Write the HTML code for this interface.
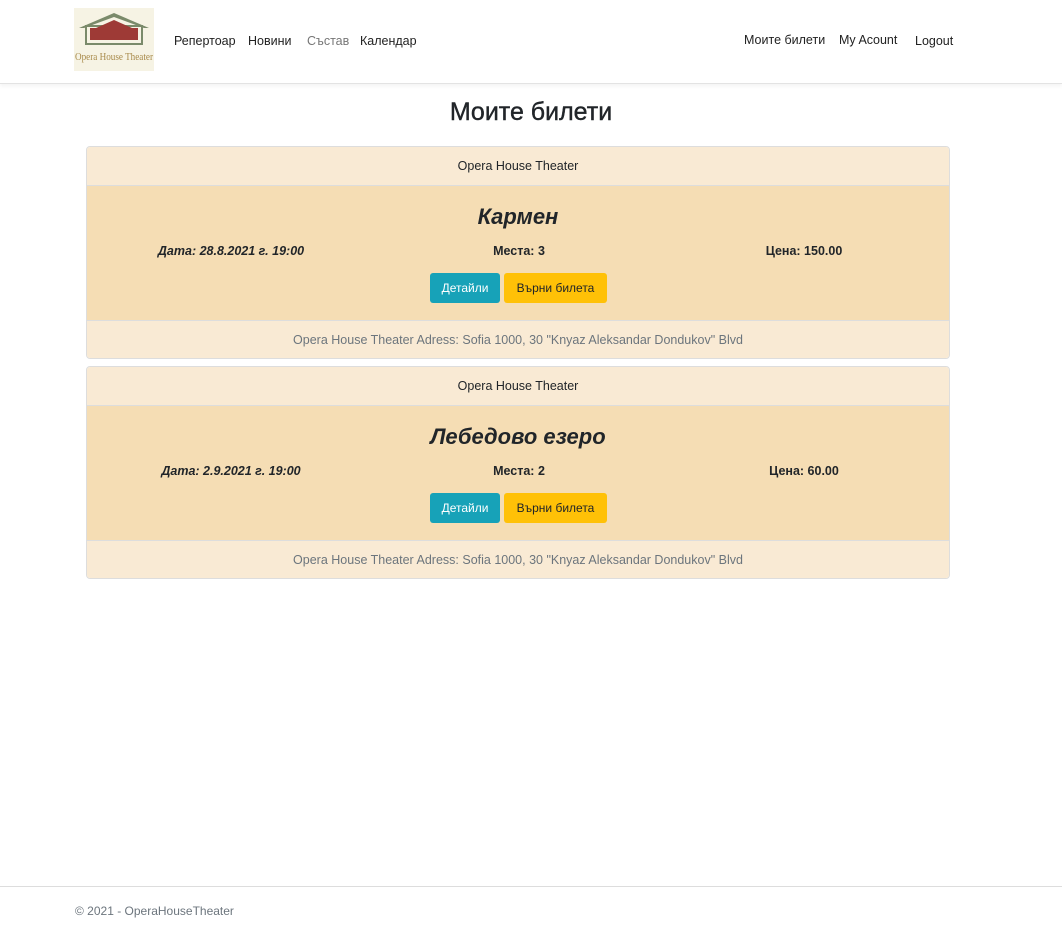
<!DOCTYPE html>
<html><head><meta charset="utf-8"><style>
*{box-sizing:border-box;margin:0;padding:0}
body{width:1062px;height:932px;font-family:"Liberation Sans",sans-serif;font-size:13px;color:#212529;background:#fff;position:relative;overflow:hidden}
.nav{height:84px;border-bottom:1px solid #e3e3e3;box-shadow:0 2px 4px rgba(0,0,0,.05);position:relative}
.logo{position:absolute;left:74px;top:8px;width:80px;height:63px;background:#f6f3e4}
.nl{position:absolute;top:34px;font-size:12.5px;color:#222}
h1{position:absolute;top:98px;width:100%;text-align:center;font-size:25px;font-weight:normal;color:#212529;-webkit-text-stroke:0.4px #212529}
.card{position:absolute;left:86px;width:864px;border:1px solid #ddd;border-radius:4px;overflow:hidden}
.ch{height:39px;background:#f9ead4;border-bottom:1px solid #ddd;text-align:center;line-height:38px;font-size:12.5px}
.cb{height:134px;background:#f5ddb4;position:relative}
.cf{height:38px;background:#f9ead4;border-top:1px solid #ddd;text-align:center;line-height:38px;color:#6c757d;font-size:12.5px}
.t{position:absolute;top:18px;width:100%;text-align:center;font-size:22px;font-weight:bold;font-style:italic}
.r{position:absolute;top:58px;font-size:12.5px;font-weight:bold;text-align:center;width:288px}
.b{position:absolute;top:87px;height:30px;line-height:30px;border-radius:3px;font-size:12px;text-align:center}
.d{left:343px;width:70px;background:#17a2b8;color:#fff}
.v{left:417px;width:103px;background:#ffc107;color:#212529}
.foot{position:absolute;top:886px;left:0;width:100%;border-top:1px solid #ddd;padding:17px 0 0 75px;color:#6c757d;font-size:12px}
</style></head><body>
<div class="nav">
<div class="logo"><svg width="80" height="63" viewBox="0 0 80 63">
<polygon points="5,20 40,5 75,20 70,20 40,9 10,20" fill="#7a8a6a"/>
<rect x="12" y="18" width="56" height="18" fill="none" stroke="#7a8a6a" stroke-width="2"/>
<rect x="16" y="20" width="48" height="12" fill="#9e3a36"/>
<polygon points="22,20 40,12 58,20" fill="#9e3a36"/>
<text x="1" y="52" font-family="Liberation Serif,serif" font-size="11" fill="#a88a4a" textLength="78" lengthAdjust="spacingAndGlyphs">Opera House Theater</text></svg></div>
<span class="nl" style="left:174px">Репертоар</span>
<span class="nl" style="left:248px">Новини</span>
<span class="nl" style="left:307px;color:#777">Състав</span>
<span class="nl" style="left:360px">Календар</span>
<span class="nl" style="left:744px;top:33px">Моите билети</span>
<span class="nl" style="left:839px;top:33px">My Acount</span>
<span class="nl" style="left:915px">Logout</span>
</div>
<h1>Моите билети</h1>
<div class="card" style="top:146px">
<div class="ch">Opera House Theater</div>
<div class="cb"><div class="t">Кармен</div>
<div class="r" style="left:0;font-style:italic">Дата: 28.8.2021 г. 19:00</div>
<div class="r" style="left:288px">Места: 3</div>
<div class="r" style="left:573px">Цена: 150.00</div>
<div class="b d">Детайли</div><div class="b v">Върни билета</div></div>
<div class="cf">Opera House Theater Adress: Sofia 1000, 30 "Knyaz Aleksandar Dondukov" Blvd</div>
</div>
<div class="card" style="top:366px">
<div class="ch">Opera House Theater</div>
<div class="cb"><div class="t">Лебедово езеро</div>
<div class="r" style="left:0;font-style:italic">Дата: 2.9.2021 г. 19:00</div>
<div class="r" style="left:288px">Места: 2</div>
<div class="r" style="left:573px">Цена: 60.00</div>
<div class="b d">Детайли</div><div class="b v">Върни билета</div></div>
<div class="cf">Opera House Theater Adress: Sofia 1000, 30 "Knyaz Aleksandar Dondukov" Blvd</div>
</div>
<div class="foot">© 2021 - OperaHouseTheater</div>
</body></html>
